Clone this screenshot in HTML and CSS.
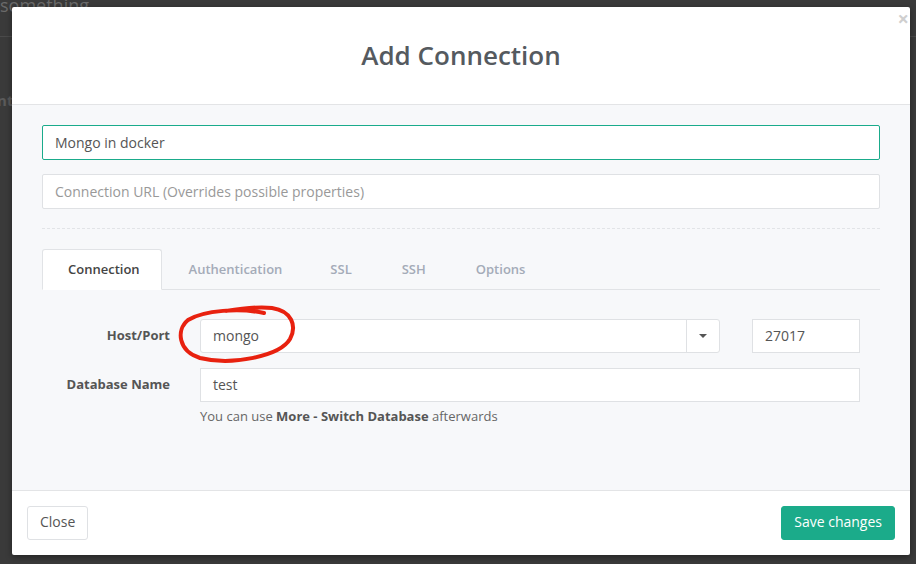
FILE: index.html
```html
<!DOCTYPE html>
<html>
<head>
<meta charset="utf-8">
<link rel="stylesheet" href="styles.css">
</head>
<body>
<div class="backdrop-page">
  <div class="bg-top">something</div>
  <div class="bg-line"></div>
  <div class="bg-heading">Management</div>
</div>
<div class="modal">
  <div class="modal-header">
    <h2 class="modal-title">Add Connection</h2>
    <span class="close-x">&times;</span>
  </div>
  <div class="modal-body">
    <input class="field field-focus" type="text" value="Mongo in docker">
    <input class="field" type="text" placeholder="Connection URL (Overrides possible properties)">
    <div class="dashed"></div>
    <div class="tabs">
      <div class="tab active">Connection</div>
      <div class="tab">Authentication</div>
      <div class="tab">SSL</div>
      <div class="tab">SSH</div>
      <div class="tab">Options</div>
      <div class="tab-fill"></div>
    </div>
    <div class="form-row">
      <label class="form-label">Host/Port</label>
      <div class="host-group">
        <div class="host-input">mongo</div>
        <div class="caret-btn"><span class="caret"></span></div>
      </div>
      <div class="port-input">27017</div>
    </div>
    <div class="form-row row-db">
      <label class="form-label">Database Name</label>
      <div class="db-col">
        <div class="db-input">test</div>
        <div class="help">You can use <b>More - Switch Database</b> afterwards</div>
      </div>
    </div>
  </div>
  <div class="modal-footer">
    <button class="btn btn-default">Close</button>
    <button class="btn btn-primary">Save changes</button>
  </div>
</div>
<svg class="annotation" width="916" height="564" viewBox="0 0 916 564">
  <path d="M 264 313 C 240 308, 204 310, 188 320 C 176 330, 178 351, 200 358 C 232 366, 280 356, 290 339 C 297 326, 292 311, 272 308 C 256 306, 238 309, 226 311" fill="none" stroke="#e8210f" stroke-width="4" stroke-linecap="round" stroke-linejoin="round"/>
</svg>
</body>
</html>
```
FILE: styles.css
```css
html, body {
  margin: 0;
  padding: 0;
}
body {
  width: 916px;
  height: 564px;
  background: #3a3a3a;
  font-family: "Open Sans", "Noto Sans", sans-serif;
  position: relative;
  overflow: hidden;
}
.backdrop-page {
  position: absolute;
  inset: 0;
}
.bg-top {
  position: absolute;
  left: 0;
  top: -7px;
  color: #6a6a6a;
  font-size: 18px;
}
.bg-line {
  position: absolute;
  left: 0;
  right: 0;
  top: 36px;
  height: 1px;
  background: #4a4a4a;
}
.bg-heading {
  position: absolute;
  left: -86px;
  top: 90px;
  color: #5a5a5a;
  font-weight: 700;
  font-size: 15px;
}
.modal {
  position: absolute;
  left: 12px;
  top: 7px;
  width: 898px;
  height: 548px;
  background: #fff;
  border-radius: 2px;
  display: flex;
  flex-direction: column;
  box-shadow: 0 2px 6px rgba(0,0,0,0.4);
}
.modal-header {
  height: 97px;
  border-bottom: 1px solid #e3e4e6;
  display: flex;
  align-items: center;
  justify-content: center;
  position: relative;
}
.modal-title {
  margin: 0 0 2px 0;
  font-size: 26px;
  font-weight: 600;
  color: #555a5f;
  letter-spacing: 0;
}
.close-x {
  position: absolute;
  right: 1px;
  top: -2px;
  font-size: 20px;
  font-weight: 700;
  color: #cfcfcf;
}
.modal-body {
  height: 385px;
  box-sizing: border-box;
  background: #f7f8fa;
  padding: 20px 30px 0 30px;
  display: flex;
  flex-direction: column;
}
.field {
  display: block;
  box-sizing: border-box;
  width: 838px;
  height: 35px;
  border: 1px solid #dfe1e4;
  border-radius: 2px;
  background: #fff;
  font-family: inherit;
  font-size: 14px;
  color: #555;
  padding: 0 12px;
  outline: none;
  margin: 0 0 14px 0;
}
.field-focus {
  border-color: #1aab8b;
}
.field::placeholder {
  color: #999;
}
.dashed {
  margin-top: 5px;
  border-top: 1px dashed #e2e4e7;
  width: 838px;
}
.tabs {
  margin-top: 20px;
  display: flex;
  height: 41px;
  width: 838px;
}
.tab {
  box-sizing: border-box;
  height: 41px;
  padding: 0 27px 2px 26px;
  display: flex;
  align-items: center;
  font-size: 13px;
  font-weight: 600;
  color: #a4abb8;
  border-bottom: 1px solid #e1e3e6;
  border-top: 1px solid transparent;
}
.tab:nth-child(2) { padding: 0 24px 2px 27px; }
.tab:nth-child(3) { padding: 0 25px 2px 24px; }
.tab:nth-child(4) { padding: 0 26px 2px 25px; }
.tab:nth-child(5) { padding: 0 20px 2px 24px; }
.tab.active {
  background: #fff;
  color: #444;
  border: 1px solid #e1e3e6;
  border-bottom-color: #fff;
  border-radius: 3px 3px 0 0;
  padding: 0 21px 2px 25px;
}
.tab-fill {
  flex: 1;
  border-bottom: 1px solid #e1e3e6;
}
.form-row {
  margin-top: 29px;
  display: flex;
  align-items: flex-start;
}
.row-db {
  margin-top: 15px;
}
.form-label {
  width: 128px;
  margin-right: 30px;
  text-align: right;
  font-size: 13px;
  font-weight: 700;
  color: #555;
  line-height: 32px;
}
.host-group {
  display: flex;
  width: 520px;
  height: 34px;
  box-sizing: border-box;
  border: 1px solid #dfe1e4;
  border-radius: 3px;
  background: #fff;
}
.host-input {
  flex: 1;
  padding: 0 12px;
  font-size: 14px;
  color: #555;
  line-height: 32px;
}
.caret-btn {
  width: 32px;
  border-left: 1px solid #dfe1e4;
  display: flex;
  align-items: center;
  justify-content: center;
}
.caret {
  width: 0;
  height: 0;
  border-left: 4px solid transparent;
  border-right: 4px solid transparent;
  border-top: 4px solid #555;
}
.port-input {
  margin-left: 32px;
  width: 108px;
  height: 34px;
  box-sizing: border-box;
  border: 1px solid #dfe1e4;
  background: #fff;
  padding: 0 12px;
  font-size: 14px;
  color: #555;
  line-height: 32px;
}
.db-col {
  display: flex;
  flex-direction: column;
}
.db-input {
  width: 660px;
  height: 34px;
  box-sizing: border-box;
  border: 1px solid #dfe1e4;
  background: #fff;
  padding: 0 12px;
  font-size: 14px;
  color: #555;
  line-height: 32px;
}
.help {
  margin-top: 4px;
  font-size: 13px;
  color: #666;
  line-height: 20px;
}
.help b {
  color: #555;
  font-weight: 700;
}
.modal-footer {
  flex: 1;
  border-top: 1px solid #e3e4e6;
  display: flex;
  justify-content: space-between;
  align-items: flex-start;
  padding: 15px 15px 0 15px;
}
.btn {
  height: 34px;
  font-family: inherit;
  font-size: 14px;
  border-radius: 3px;
  padding: 0 12px 3px 12px;
  cursor: pointer;
}
.btn-default {
  background: #fff;
  border: 1px solid #dfe1e4;
  color: #555;
}
.btn-primary {
  background: #1bab8a;
  border: 1px solid #1bab8a;
  color: #fff;
}
.annotation {
  position: absolute;
  left: 0;
  top: 0;
  pointer-events: none;
}
```
